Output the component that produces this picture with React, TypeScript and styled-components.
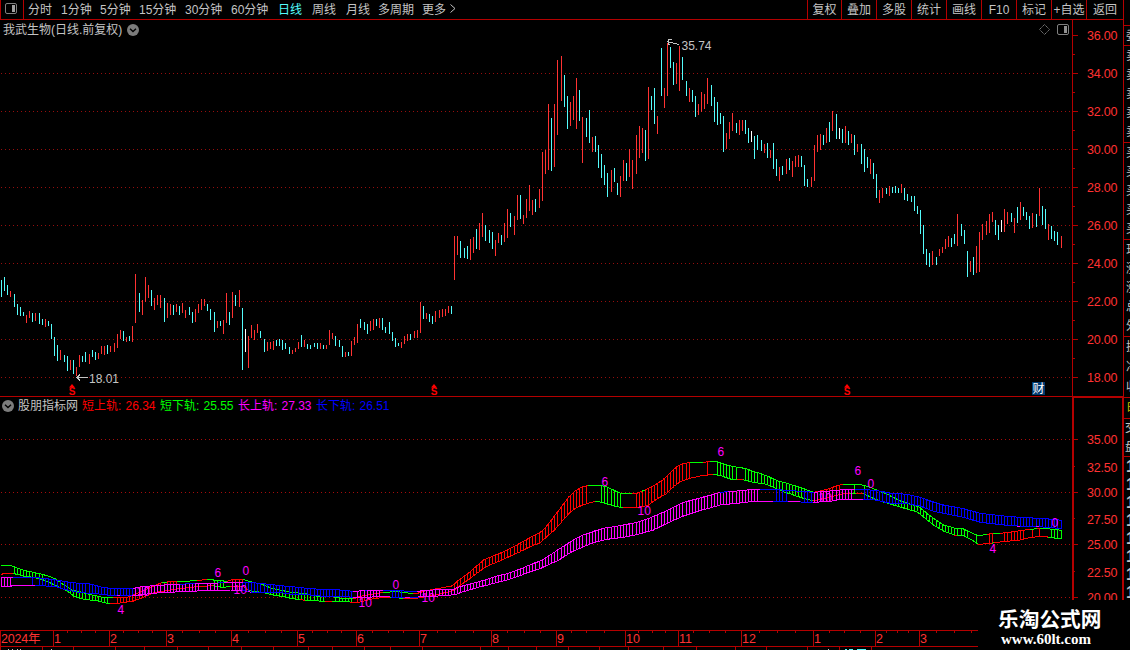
import React from "react";
import styled, { createGlobalStyle } from "styled-components";

const LINE = "#b40000";
const UP = "#ff3232";
const DOWN = "#54fcfc";
const GRAY = "#c4c4c4";
const SANS = `"Liberation Sans", "Noto Sans CJK SC", sans-serif`;

const Global = createGlobalStyle`
  * { box-sizing: border-box; }
  body { margin: 0; background: #000; overflow: hidden; }
`;

const Screen = styled.div`
  position: relative;
  display: flex;
  width: 1130px;
  height: 650px;
  overflow: hidden;
  background: #000;
  color: ${GRAY};
  font: 12px/14px ${SANS};
  white-space: nowrap;
`;

const Main = styled.main`
  display: flex;
  flex-direction: column;
  width: 1123px;
  flex: none;
`;

const Toolbar = styled.nav`
  display: flex;
  height: 20px;
  border-bottom: 1px solid ${LINE};
  border-left: 1px solid ${LINE};
`;

const LayoutToggle = styled.div`
  width: 23px;
  padding: 3px 0 0 4px;
  border-right: 1px solid ${LINE};
  line-height: 0;
`;

const Periods = styled.div`
  flex: 1;
  display: flex;
  padding: 3px 0 0 4px;
  svg { margin-top: -1px; }
`;

const Period = styled.span<{ $w: number; $active?: boolean }>`
  width: ${(p) => p.$w}px;
  color: ${(p) => (p.$active ? DOWN : GRAY)};
`;

const Tool = styled.span<{ $w: number }>`
  width: ${(p) => p.$w}px;
  padding-top: 3px;
  border-left: 1px solid ${LINE};
  text-align: center;
`;

const Pane = styled.section<{ $h: number }>`
  position: relative;
  height: ${(p) => p.$h}px;
  overflow: hidden;
  svg { display: block; }
`;

const PaneTitle = styled.header<{ $top: number; $left: number; $gap: number }>`
  position: absolute;
  top: ${(p) => p.$top}px;
  left: ${(p) => p.$left}px;
  display: flex;
  align-items: center;
  gap: ${(p) => p.$gap}px;
  svg { margin-top: -1px; }
`;

const Reading = styled.span<{ $c: string }>`
  display: flex;
  width: 74px;
  color: ${(p) => p.$c};
  b { width: 43.5px; font-weight: 400; }
`;

const Side = styled.aside`
  display: flex;
  flex-direction: column;
  width: 7px;
  height: 650px;
  padding-top: 25px;
  overflow: hidden;
  border-left: 1px solid ${LINE};
`;

const SideGroup = styled.div<{ $h: number; $c?: string; $pad?: number }>`
  display: flex;
  flex-direction: column;
  flex: none;
  height: ${(p) => p.$h}px;
  padding-left: ${(p) => p.$pad ?? 2}px;
  border-top: 1px solid ${LINE};
  overflow: hidden;
  color: ${(p) => p.$c ?? GRAY};
  span { flex: 1; display: flex; align-items: center; }
`;

const SideTick = styled.div`
  height: 18px;
  font: bold 16px/20px ${SANS};
`;

const Watermark = styled.div`
  position: absolute;
  left: 978px;
  top: 600px;
  width: 152px;
  height: 50px;
  padding: 6px 0 0 20px;
  background: #000;
  color: #fff;
  strong { display: block; font: bold 20.7px/25px "Noto Sans CJK SC", sans-serif; }
  em { display: block; padding-left: 3px; font: normal bold 15px/17px "Liberation Serif", serif; }
`;

/* Chart data is kept in thirds of a pixel, measured from the origin of each block. */
type Bar = { x: number; top: number; bottom: number; color: string };
type Point = { x: number; y: number; color: string };

const BAR_COLORS: Record<string, string> = { r: UP, c: DOWN, w: "#ffffff" };
const BAND_COLORS: Record<string, string> = { r: "#ff0000", g: "#00ff00", m: "#ff00ff", b: "#0000ff" };

const bars = (ox: number, oy: number, src: string): Bar[] =>
  src.trim().split(/\s+/).map((s) => {
    const [x, t, b] = s.slice(0, -1).split(",").map(Number);
    return { x: ox + Math.floor(x / 3), top: oy + Math.round(t / 3), bottom: oy + Math.round(b / 3), color: BAR_COLORS[s.slice(-1)] };
  });

const BARS: Bar[] = [
  ...bars(0, 260, `4,60,110c 13,51,93c 22,75,104c 31,93,110r 43,102,140c 52,132,164c 61,141,167c 70,156,167c 79,165,188r 88,153,173r
  97,159,185c 106,159,182r 118,159,191c 127,177,194c 136,177,200r 145,183,197c 154,192,236c 163,231,287c 172,255,302c 181,270,299r
  193,285,305c 202,288,332c 211,300,329r 220,300,341c 229,321,347r 238,285,320r 247,288,305c 256,276,305c 268,282,311r 277,270,290c
  286,276,299c 295,279,296r 304,258,281r 313,258,284r 322,255,281c 331,258,275r 343,249,275r 352,222,263r 361,210,236r 370,213,242c
  379,231,245r 388,228,242c 397,198,245r 406,42,188r 418,99,155c 427,120,164r 436,51,125r 445,75,113r 454,90,137c 463,114,149r
  472,105,134r 481,105,143r 493,114,185c 502,129,173r 511,132,164r 520,135,164c 529,132,155r 538,138,164c 547,129,158r 556,150,173r
  568,141,164c 577,156,188c 586,147,185r 595,132,158r 604,117,149r 613,117,137r 622,132,152c 631,147,179c 643,156,215c 652,183,203r
  661,183,197c 670,180,221r 679,99,188r 688,156,194c 697,96,173r 706,105,137c 718,90,140r 727,144,329c 736,207,275w 745,228,323r
  754,195,233r 763,210,239r 772,192,218r 781,213,233c 793,237,275c 802,246,272r 811,246,266r 820,243,269r 829,240,257c 838,237,257c
  847,240,269c 856,249,266c 868,261,281c 877,270,281r 886,264,275r 895,246,266r`),
  ...bars(240, 200, `184,405,440c 193,420,440r 202,432,446c 211,435,446c 223,429,440c 232,429,446c 241,429,446r 250,435,446c 259,435,446r
  268,390,434r 277,399,416r 286,408,437c 298,420,440c 307,438,470c 316,456,470r 325,456,467c 334,423,467r 343,411,434r 352,372,428r
  361,357,383c 373,366,389c 382,372,401c 391,363,392r 400,357,389r 409,357,377c 418,354,383r 427,354,389c 436,381,398c 448,366,401c
  457,396,422c 466,414,440c 475,429,437c 484,426,443r 493,408,431r 502,402,422r 511,402,419c 523,393,413r 532,390,413r 541,306,398r
  550,318,356c 559,339,356r 568,342,365c 577,348,371c 586,333,365r 598,330,353r 607,327,350r 616,327,347r 625,318,338r 634,318,341c
  643,108,239r 652,108,164r 661,123,173c 673,144,173c 682,138,176c 691,117,179r 700,111,158r 709,87,146c 718,69,149r 727,39,110r
  736,75,122c 748,90,128c 757,96,146c 766,120,167r 775,99,128r 784,105,134c 793,69,125r 802,27,113r 811,39,80c 823,48,104r 832,-16,59r`),
  ...bars(520, 30, `1,495,566c 10,555,581r 19,507,563r 28,465,542r 37,510,554r 46,507,545c 58,477,533r 67,366,512r 76,360,431r 85,222,419r
  94,264,422c 103,222,410r 112,90,314r 124,78,212r 133,135,230c 142,198,296c 151,216,287r 160,198,269r 169,144,296r 178,180,272c
  187,261,398r 199,264,320c 208,240,338c 217,321,365r 226,318,365c 235,345,413c 244,372,443c 253,405,464c 262,429,500c 274,420,485r
  283,414,455c 292,459,494c 301,438,500r 310,390,452r 319,399,452c 328,357,440r 337,390,476r 349,315,431r 358,288,383r 367,294,368r
  376,300,392c 385,171,386r 394,198,239c 403,174,281c 412,258,311r 424,54,197c 433,174,233r 442,39,197r 451,51,113c 460,96,164c
  469,99,161r 478,48,182r 487,81,149c 499,153,197c 508,174,215r 517,180,215c 526,198,260c 535,222,254r 544,186,245r 553,192,236r
  562,144,221r 574,165,227c 583,201,275c 592,216,284c 601,249,281c 610,258,365c 619,309,356r 628,276,326r 637,249,302r 649,279,308c
  658,270,314r 667,270,302r 676,270,311c 685,294,338c 694,303,335w 703,318,386c 712,315,359c 724,330,362c 733,342,368r 742,339,383c
  751,360,383r 760,339,416c 769,387,437c 778,411,452r 787,408,434c 799,387,431r 808,384,419c 817,393,440r 826,378,410r 835,375,410r
  844,378,410c 853,405,467c 862,447,470c 874,441,470r 883,345,452r`),
  ...bars(790, 100, `82,105,155r 91,102,149r 100,105,134c 109,84,128r 118,66,125c 127,33,92r 139,42,116c 148,84,116w 157,87,128c
  166,78,128r 175,93,134c 184,102,128r 193,105,164c 202,132,155r 214,132,191c 223,147,215c 232,171,203c 241,177,221r 250,189,236c
  259,222,293c 268,270,308r 277,264,293r 289,264,281c 298,258,287r 307,261,278c 316,258,278c 325,264,278c 334,252,278r 343,264,299c
  352,282,302c 364,288,305c 373,288,332c 382,318,341c 391,330,401c 400,375,461c 409,447,494c 418,459,500c 427,453,494r 439,471,494c
  448,447,467r 457,441,458r 466,417,446r 475,408,440r 484,414,440c 493,402,431c 502,342,437r 514,372,407c 523,390,431c 532,453,530c
  541,483,515r 550,471,524c 559,438,518r 568,396,515r 577,372,419r 589,363,404r 598,342,398r 607,336,365r 616,360,404c 625,375,419c
  634,360,395w 643,327,395r 652,336,371r 664,339,365c 673,354,398r 682,321,368c 691,306,359r 700,321,347c 709,336,359c 718,348,386c
  727,339,383r 739,342,380c 748,264,347r 757,318,374c 766,327,386c 775,372,419r 784,378,416c 793,393,422c 802,396,434c 814,408,443r`),
];

/* A colour letter after a point applies to the line from that point on. */
const track = (...blocks: [number, number, string][]): Point[] => {
  let color = "";
  return blocks.flatMap(([ox, oy, src]) =>
    src.trim().split(/\s+/).map((s) => {
      const m = /^(\d+),(-?\d+)([rgmb]?)$/.exec(s)!;
      if (m[3]) color = BAND_COLORS[m[3]];
      return { x: ox + Number(m[1]) / 3, y: oy + Number(m[2]) / 3, color };
    })
  );
};

const SHORT_TOP = track(
  [0, 540, "4,76g 28,76 45,81 60,88 80,93 100,97 130,104 150,110 165,117 180,127 215,150 240,155 265,163 290,168 305,172 340,174r 380,172 400,165 415,158 440,148 460,138 485,128g 500,126r 530,125g 590,122r 620,118g 640,120 680,124r 700,118 728,118g 745,124 760,127 790,135 815,145 840,150"],
  [290, 520, "0,217 45,221 80,229 110,229r 125,230g 150,234 190,237r 205,230 240,224 280,217g 320,215 370,221r 385,219 400,214 430,208 485,198 500,185 540,155 580,120 640,95 680,75 715,55 748,38"],
  [540, 440, "0,278 20,258 40,232 60,205 85,172 100,157 120,143 145,136g 180,136 200,141 220,150 240,160 275,162r 290,160 305,154g 315,150r 345,135 370,118 390,98 410,80 430,70 450,68g 490,67r 510,64g 530,65 560,75 590,82 615,85 635,93 660,100 690,112 710,122 740,130"],
  [800, 395, "0,277 40,292r 60,288 90,280 110,272 130,268g 180,268 200,274 215,279 240,290 260,297 300,318 340,330 360,338 380,355 400,370 430,390 465,400 490,402 510,412 535,422 560,418r 580,415g 600,415r 625,412 660,407 690,403g 712,401r 720,401g 750,402 785,406"]
);
const SHORT_BOTTOM = track(
  [0, 540, "4,103r 10,101 38,100g 70,108 100,112 130,120 155,131 180,143 200,152 220,168 240,176 270,180 300,184 320,190 330,190r 355,190 400,183 430,172 460,158 500,152 530,147 590,140 640,137g 665,142 690,140r 728,138 745,152g 790,158 820,165 860,172"],
  [290, 520, "0,235 30,239r 45,241g 105,244r 125,244g 150,243 180,246r 205,247 240,238 280,232 300,232g 340,235r 385,234 430,226 490,212 505,200 540,175 580,145 600,135 640,118 690,95 720,80"],
  [540, 440, "0,308 20,290 45,268 65,245 85,222 105,205 130,194 165,184g 180,186 200,192 230,200 250,203r 290,204 325,195 345,180 380,160 400,140 420,125 450,115 480,108 520,103g 545,108 570,117 590,119r 608,119g 640,127 675,132 700,142 730,155 760,165"],
  [800, 395, "0,307 40,318r 80,308 130,296 150,294g 168,294r 190,296g 215,308 240,318 280,330 330,345 350,350 375,370 400,390 430,408 462,420r 472,421g 490,422 520,438 535,448r 575,445g 582,443r 610,440 660,435 690,427 735,424 745,427g 785,432"]
);
const LONG_TOP = track(
  [0, 540, "4,112m 38,112b 110,113 140,116 180,122 215,128 270,132 310,143 345,146 400,146m 410,142 470,136 540,133b 585,130m 655,129b 672,128m 720,126 728,126b 780,130 850,138"],
  [290, 520, "0,199 30,203 90,208 150,210 190,214m 225,212b 232,212m 280,211b 340,213 380,215m 395,212 430,210 490,208 500,203 520,197 560,187 600,175 620,168 655,160 700,143 725,132"],
  [540, 440, "0,363 10,358 45,335 75,315 100,300 125,286 160,274 190,265 240,257 290,247 330,234 375,214 430,187 480,174 540,157b 563,155m 590,153 630,149 660,149b 705,149 745,151"],
  [800, 395, "0,289 42,292m 90,288 130,284 165,283b 175,282 230,287 270,294 320,298 360,307 390,318 430,330 490,341 540,355 600,362 660,367 735,371 785,376"]
);
const LONG_BOTTOM = track(
  [0, 540, "4,138m 35,138 35,136 105,136b 170,140 190,148 240,158 290,161 320,165 350,166m 360,167b 395,167m 440,162 480,158 590,153 690,150 725,151b 745,155m 752,157b 840,158"],
  [290, 520, "0,222 50,224 90,228 150,228 190,232m 230,232 280,229 300,231b 345,232m 360,234b 385,231m 430,229 495,224 510,218 560,203 600,193 650,180 700,163"],
  [540, 440, "0,386 60,358 90,338 130,320 160,308 200,298 250,292 290,284 340,270 380,250 430,228 480,212 540,195 590,190 640,184 700,184b 745,184m 780,185b"],
  [800, 395, "0,321 40,322m 90,319 120,313 190,313b 215,313 240,318 270,325 320,326 360,333 400,349 440,357 490,367 540,382 600,389 650,393m 660,393b 708,395m 718,395b 785,401"]
);

type Hatch = [number, number, string];
const SHORT_HATCH: Hatch[] = [
  [14, 43, "g"], [70, 108, "g"], [115, 151, "r"], [160, 178, "r"], [212, 223, "g"], [232, 243, "r"], [262, 325, "g"], [335, 351, "g"],
  [357, 376, "r"], [453, 588, "r"], [600, 621, "g"], [636, 690, "r"], [706, 709, "r"], [717, 737, "g"], [745, 812, "g"], [815, 840, "r"],
  [853, 856, "g"], [863, 866, "g"], [885, 968, "g"], [976, 978, "g"], [988, 993, "r"], [1003, 1024, "r"], [1031, 1034, "r"],
  [1038, 1040, "r"], [1050, 1062, "g"],
];
const LONG_HATCH: Hatch[] = [
  [1, 11, "m"], [32, 34, "b"], [36, 132, "b"], [135, 200, "m"], [207, 218, "m"], [230, 240, "m"], [242, 352, "b"], [356, 380, "m"],
  [391, 401, "b"], [418, 758, "m"], [776, 787, "b"], [802, 812, "b"], [814, 853, "m"], [863, 1062, "b"],
];

const yAt = (pts: Point[], x: number) => {
  for (let i = 1; i < pts.length; i++) {
    const a = pts[i - 1], b = pts[i];
    if (x <= b.x && b.x > a.x) return a.y + ((b.y - a.y) * (x - a.x)) / (b.x - a.x);
  }
  return pts[pts.length - 1].y;
};

const Track = ({ pts }: { pts: Point[] }) => (
  <g strokeWidth="1">
    {pts.slice(1).map((p, i) => (
      <line key={i} x1={pts[i].x} y1={pts[i].y} x2={p.x + 0.4} y2={p.y} stroke={pts[i].color} />
    ))}
  </g>
);

const Band = ({ top, bottom, hatch }: { top: Point[]; bottom: Point[]; hatch: Hatch[] }) => (
  <g shapeRendering="crispEdges">
    {hatch.flatMap(([from, to, c]) =>
      BARS.filter((b) => b.x >= from && b.x <= to).map((b) => {
        const t = yAt(top, b.x), u = yAt(bottom, b.x);
        return <rect key={`${c}${b.x}`} x={b.x} y={Math.round(Math.min(t, u))} width="1" height={Math.max(1, Math.round(Math.abs(u - t)))} fill={BAND_COLORS[c]} />;
      })
    )}
    <Track pts={top} />
    <Track pts={bottom} />
  </g>
);

const Grid = ({ ys, color = "#960e0e" }: { ys: number[]; color?: string }) => (
  <g shapeRendering="crispEdges">
    {ys.map((y) => <line key={y} x1="1" x2="1072" y1={y + 0.5} y2={y + 0.5} stroke={color} strokeDasharray="1 3" />)}
  </g>
);

const Ticks = ({ ys, x, len }: { ys: number[]; x: number; len: number }) => (
  <g shapeRendering="crispEdges">{ys.map((y) => <rect key={y} x={x} y={y} width={len} height="1" fill={LINE} />)}</g>
);

const Scale = ({ rows }: { rows: [number, string][] }) => (
  <g fill={UP} fontSize="12.5">
    {rows.map(([y, s]) => <text key={s} x="1087" y={y + 4.5} textLength="30.5">{s}</text>)}
  </g>
);

const Chevron = () => (
  <svg width="12" height="12" viewBox="0 0 12 12">
    <circle cx="6" cy="6" r="6" fill="#7c7c7c" />
    <path d="M3 4.7 6 7.5 9 4.7" fill="none" stroke="#000" strokeWidth="1.4" />
  </svg>
);

const Dividend = ({ x }: { x: number }) => (
  <g fill="#ff0000">
    <path d={`M${x - 3} 387.500h6l-3-3.500z`} />
    <text x={x} y="395" fontSize="10" fontWeight="bold" textAnchor="middle">S</text>
  </g>
);

const PRICE_ROWS: [number, string][] = Array.from({ length: 10 }, (_, i) => [35 + 38 * i, `${36 - 2 * i}.00`]);

const PricePane = () => (
  <Pane $h={377}>
    <svg width="1123" height="377" viewBox="0 20 1123 377" fontFamily={SANS}>
      <Grid ys={PRICE_ROWS.slice(1).map((r) => r[0])} />
      <g shapeRendering="crispEdges">
        {BARS.map((b) => <rect key={b.x} x={b.x} y={b.top} width="1" height={b.bottom - b.top} fill={b.color} />)}
        <rect x="1072" y="20" width="1" height="377" fill={LINE} />
        <rect x="0" y="396" width="1123" height="1" fill={LINE} />
      </g>
      <Ticks ys={PRICE_ROWS.map((r) => r[0])} x={1073} len={5} />
      <Ticks ys={PRICE_ROWS.slice(1).map((r) => r[0] - 19)} x={1073} len={2} />
      <Scale rows={PRICE_ROWS} />
      <g fill="none" stroke={GRAY} shapeRendering="crispEdges">
        <path d="M76 377.5H88M80 374.5l-3 3 3 3" />
        <path d="M667.500 41.500 679 44.500M672 39.500h-4v4l2 1.500" />
      </g>
      <g fill={GRAY} fontSize="12">
        <text x="89" y="383">18.01</text>
        <text x="681.500" y="50">35.74</text>
      </g>
      <Dividend x={72} />
      <Dividend x={434} />
      <Dividend x={847} />
      <rect x="1032" y="382" width="13" height="13" fill="#003a70" />
      <text x="1032.500" y="393" fontSize="12" fill="#fff">财</text>
      <path d="M1044.500 24.500l5 5-5 5-5-5z" fill="none" stroke="#808080" strokeDasharray="1.400 .6" />
      <rect x="1057.500" y="24.500" width="11" height="10" rx="1.500" fill="none" stroke="#808080" />
      <rect x="1064" y="26" width="3" height="7" fill="#909090" />
    </svg>
    <PaneTitle $top={3} $left={3} $gap={5}>
      <span>我武生物(日线.前复权)</span>
      <Chevron />
    </PaneTitle>
  </Pane>
);

const MARKS: [number, number, string][] = [
  [214, 577, "6"], [242, 575, "0"], [117, 614, "4"], [233, 594, "10"], [136, 596, "10"], [392, 589, "0"], [358, 607, "10"], [421, 602, "10"],
  [601, 486, "6"], [637, 515, "10"], [717, 456, "6"], [854, 475, "6"], [867, 488, "0"], [818, 502, "10"], [989, 553, "4"], [1051, 527, "0"],
];

const IndicatorPane = () => (
  <Pane $h={233}>
    <svg width="1123" height="233" viewBox="0 397 1123 233" fontFamily={SANS}>
      <Grid ys={[439, 492, 544, 597]} color="#a80c0c" />
      <Band top={SHORT_TOP} bottom={SHORT_BOTTOM} hatch={SHORT_HATCH} />
      <Band top={LONG_TOP} bottom={LONG_BOTTOM} hatch={LONG_HATCH} />
      <g fill="#ff00ff" fontSize="12">
        {MARKS.map(([x, y, s]) => <text key={`${x}-${y}`} x={x + 0.5} y={y}>{s}</text>)}
      </g>
      <g fill={LINE} shapeRendering="crispEdges">
        <rect x="1072" y="397" width="2" height="233" />
        <rect x="1072" y="397" width="51" height="1" />
        <rect x="1122" y="397" width="1" height="233" />
      </g>
      <Ticks ys={[439, 492, 544, 597]} x={1074} len={4} />
      <Ticks ys={[466, 518, 571]} x={1074} len={1} />
      <Scale rows={[[439, "35.00"], [467, "32.50"], [492, "30.00"], [519, "27.50"], [544, "25.00"], [572, "22.50"], [597, "20.00"]]} />
    </svg>
    <PaneTitle $top={2} $left={2} $gap={4}>
      <Chevron />
      <span>股朋指标网</span>
      <Reading $c="#ff0000"><b>短上轨:</b>26.34</Reading>
      <Reading $c="#00ff00"><b>短下轨:</b>25.55</Reading>
      <Reading $c="#ff00ff"><b>长上轨:</b>27.33</Reading>
      <Reading $c="#0000ff"><b>长下轨:</b>26.51</Reading>
    </PaneTitle>
  </Pane>
);

const MONTHS: [number, string][] = [
  [0, "2024年"], [53, "1"], [109, "2"], [166, "3"], [231, "4"], [297, "5"], [356, "6"], [419, "7"], [491, "8"], [556, "9"],
  [625, "10"], [678, "11"], [741, "12"], [813, "1"], [875, "2"], [919, "3"],
];
const WEEKS = [67, 81, 95, 123, 138, 152, 182, 199, 215, 248, 265, 281, 312, 327, 341, 372, 388, 403, 437, 455, 473, 507, 524, 540, 571, 586, 604, 638, 652, 665, 693, 709, 725, 759, 777, 795, 829, 844, 860, 886, 897, 908, 936, 954, 971];
const TABS = [0, 42, 73, 115, 144, 177, 208, 241, 273, 308, 332, 364, 390, 422, 480, 508, 536, 568, 599, 628, 663, 696, 735, 766, 807, 839, 871];

const TimeAxis = () => (
  <Pane $h={20}>
    <svg width="1123" height="20" viewBox="0 630 1123 20" fontFamily={SANS}>
      <g fill={LINE} shapeRendering="crispEdges">
        <rect x="0" y="630" width="978" height="1" />
        <rect x="0" y="646" width="978" height="1" />
        {MONTHS.map(([x]) => <rect key={x} x={x} y="630" width="1" height="16" />)}
        {WEEKS.map((x) => <rect key={x} x={x} y="631" width="1" height="2" />)}
        {TABS.map((x) => <rect key={`t${x}`} x={x} y="647" width="1" height="3" />)}
      </g>
      <g fill={UP} fontSize="12.5">
        {MONTHS.map(([x, s]) => <text key={x} x={x + 1} y="643" textLength={x ? undefined : 39.5}>{s}</text>)}
      </g>
      <g shapeRendering="crispEdges">
        <path d="M8 649.500h1m3 0h1m4 0h1m2 0h1m30 0h1M828 649.500h1" stroke={GRAY} />
        <path d="M845 649.500h2m2 0h4m4 0h9" stroke={DOWN} />
      </g>
    </svg>
  </Pane>
);

const PERIODS: [string, number][] = [
  ["分时", 33], ["1分钟", 39], ["5分钟", 39], ["15分钟", 46], ["30分钟", 46], ["60分钟", 47], ["日线", 34], ["周线", 34], ["月线", 32], ["多周期", 44], ["更多", 28],
];
const TOOLS: [string, number][] = [["复权", 34], ["叠加", 35], ["多股", 35], ["统计", 35], ["画线", 35], ["F10", 35], ["标记", 35], ["+自选", 35], ["返回", 37]];

const SideQuotes = () => (
  <Side>
    <SideGroup $h={20}><span>委</span></SideGroup>
    <SideGroup $h={97}>{[1, 2, 3, 4, 5].map((n) => <span key={n}>卖</span>)}</SideGroup>
    <SideGroup $h={97}>{[1, 2, 3, 4, 5].map((n) => <span key={n}>买</span>)}</SideGroup>
    <SideGroup $h={97}><span>现</span><span>涨</span><span>涨</span><span>总</span><span>外</span></SideGroup>
    <SideGroup $h={61}><span>换</span><span>净</span><span>收</span></SideGroup>
    <SideGroup $h={21} $c="#c8c800" $pad={3}><span>时</span></SideGroup>
    <SideGroup $h={38} $pad={1}><span>交</span><span>盘</span></SideGroup>
    <SideGroup $h={194}>{Array.from({ length: 8 }, (_, i) => <SideTick key={i}>1</SideTick>)}</SideGroup>
  </Side>
);

export default function App() {
  return (
    <Screen>
      <Global />
      <Main>
        <Toolbar>
          <LayoutToggle>
            <svg width="12" height="11" viewBox="0 0 12 11">
              <rect x=".5" y=".5" width="11" height="10" rx="1.500" fill="none" stroke="#808080" />
              <rect x="7" y="2" width="3" height="7" fill="#a0a0a0" />
            </svg>
          </LayoutToggle>
          <Periods>
            {PERIODS.map(([label, w]) => <Period key={label} $w={w} $active={label === "日线"}>{label}</Period>)}
            <svg width="6" height="14" viewBox="0 0 6 14"><path d="M.5 2.500 5 6.500 .5 10.500" fill="none" stroke={GRAY} /></svg>
          </Periods>
          {TOOLS.map(([label, w]) => <Tool key={label} $w={w}>{label}</Tool>)}
        </Toolbar>
        <PricePane />
        <IndicatorPane />
        <TimeAxis />
      </Main>
      <SideQuotes />
      <Watermark>
        <strong>乐淘公式网</strong>
        <em>www.60lt.com</em>
      </Watermark>
    </Screen>
  );
}
